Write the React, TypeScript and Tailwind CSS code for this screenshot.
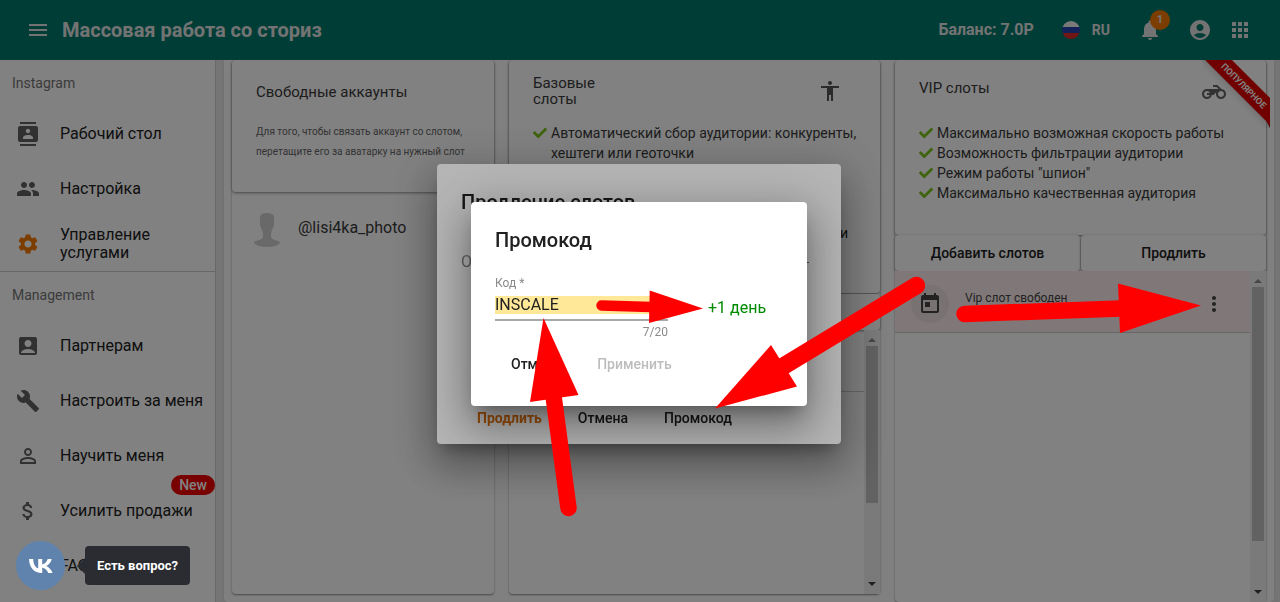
import { ReactNode } from "react";
import { FaCheck } from "react-icons/fa";
import {
    MdAccessibility, MdAccountBox, MdAccountCircle, MdApps, MdAttachMoney, MdBuild, MdContacts,
    MdGroup, MdHelp, MdMenu, MdMoreVert, MdNotifications, MdPermIdentity, MdSettings, MdToday,
} from "react-icons/md";

interface NavItem {
    label: string
    icon: ReactNode
    badge?: string
}

const instagramItems: NavItem[] = [
    { label: "Рабочий стол", icon: <MdContacts /> },
    { label: "Настройка", icon: <MdGroup /> },
    { label: "Управление услугами", icon: <MdSettings className="text-[#f57c00]" /> },
]

const managementItems: NavItem[] = [
    { label: "Партнерам", icon: <MdAccountBox /> },
    { label: "Настроить за меня", icon: <MdBuild /> },
    { label: "Научить меня", icon: <MdPermIdentity /> },
    { label: "Усилить продажи", icon: <MdAttachMoney />, badge: "New" },
    { label: "FAQ", icon: <MdHelp /> },
]

const vipFeatures = [
    "Максимально возможная скорость работы",
    "Возможность фильтрации аудитории",
    'Режим работы "шпион"',
    "Максимально качественная аудитория",
]

function NavGroup({ title, items }: { title: string, items: NavItem[] }) {
    return (
        <div>
            <div className="h-[46px] flex items-center px-3 text-sm text-[#757575]">{title}</div>
            {items.map((item) => (
                <a key={item.label} href="#" className="relative h-[55px] flex items-center pl-4 pr-2 gap-5">
                    <span className="text-2xl text-[#616161] shrink-0">{item.icon}</span>
                    <span className="text-base leading-[18px] text-[#212121]">{item.label}</span>
                    {item.badge && (
                        <span className="absolute -top-2 right-0 h-5 px-2 rounded-full bg-[#f00000] text-white text-sm font-medium">
                            {item.badge}
                        </span>
                    )}
                </a>
            ))}
        </div>
    )
}

function Feature({ children }: { children: ReactNode }) {
    return (
        <li className="flex gap-1 text-sm leading-5 text-[#3a3a3a]">
            <FaCheck className="shrink-0 mt-[3px] size-3.5 text-[#7cc61c]" />
            <span>{children}</span>
        </li>
    )
}

function Scrollbar({ thumb }: { thumb: string }) {
    return (
        <div className="w-4 shrink-0 bg-[#f1f1f1] flex flex-col items-center py-1">
            <div className="border-x-4 border-b-4 border-x-transparent border-b-[#8a8a8a] mt-1 mb-1" />
            <div className={`w-3 bg-[#c1c1c1] ${thumb}`} />
            <div className="border-x-4 border-t-4 border-x-transparent border-t-[#404040] mt-auto mb-1" />
        </div>
    )
}

function Column({ className, children }: { className: string, children: ReactNode }) {
    return (
        <section className={`relative min-w-0 flex flex-col rounded bg-white shadow-[0_1px_2px_rgba(0,0,0,0.45)] ${className}`}>
            {children}
        </section>
    )
}

const card = "rounded bg-white shadow-[0_1px_3px_rgba(0,0,0,0.45)]"
const cardTitle = "text-[15px] text-[#3a3a3a]"
const dialog = "rounded bg-white flex flex-col px-6 shadow-[0_11px_15px_-7px_rgba(0,0,0,0.3),0_24px_38px_3px_rgba(0,0,0,0.2),0_9px_46px_8px_rgba(0,0,0,0.2)]"
const flatButton = "h-9 px-4 text-sm font-medium"

// Pointers drawn over the whole screen, one path per arrow
function Arrows() {
    return (
        <svg viewBox="0 0 1280 602" className="fixed inset-0 w-full h-full z-40 pointer-events-none" fill="#f00" stroke="#f00">
            <g strokeLinecap="round">
                <path d="M568.5 508 L553.5 396" strokeWidth="16.5" />
                <path d="M916.5 285.5 L782 367" strokeWidth="17.5" />
                <path d="M964.5 314 L1121 308.5" strokeWidth="16.5" />
                <path d="M601.5 305.5 L651 307" strokeWidth="10.5" />
            </g>
            <g stroke="none">
                <path d="M543.5 318 L578.5 395 L530 402 Z" />
                <path d="M715 408.5 L771 345 L797 386.5 Z" />
                <path d="M1201 305.5 L1118 283.5 L1120 333 Z" />
                <path d="M703 308.5 L649.7 290.5 L649 323 Z" />
            </g>
        </svg>
    )
}

export default function App() {
    return (
        <div className="h-screen overflow-hidden flex flex-col bg-white font-[Roboto,sans-serif] text-[#212121]">
            <header className="relative z-10 h-[60px] shrink-0 bg-[#00796b] text-[#e4e4e4] flex items-center justify-between px-7">
                <div className="flex items-center gap-3">
                    <button aria-label="Меню"><MdMenu className="size-6 -ml-0.5" /></button>
                    <h1 className="text-xl font-bold">Массовая работа со сториз</h1>
                </div>
                <div className="flex items-center">
                    <span className="font-bold text-base">Баланс: 7.0Р</span>
                    <button className="flex items-center gap-3 ml-7 font-bold text-sm">
                        <svg viewBox="0 0 18 18" className="size-[18px] rounded-full">
                            <path d="M0 0h18v6H0z" fill="#f0f0f0" />
                            <path d="M0 6h18v6H0z" fill="#2444b0" />
                            <path d="M0 12h18v6H0z" fill="#e02b2b" />
                        </svg>
                        RU
                    </button>
                    <button aria-label="Уведомления" className="relative ml-7">
                        <MdNotifications className="size-6" />
                        <span className="absolute -top-2 left-3 size-5 rounded-full bg-[#f57c00] text-[11px] leading-5 font-bold">1</span>
                    </button>
                    <button aria-label="Профиль" className="ml-[26px]"><MdAccountCircle className="size-6" /></button>
                    <button aria-label="Приложения" className="ml-4"><MdApps className="size-6" /></button>
                </div>
            </header>

            <div className="flex flex-1 min-h-0">
                <nav className="w-[216px] shrink-0 border-r border-[#d0d0d0] overflow-hidden">
                    <NavGroup title="Instagram" items={instagramItems} />
                    <div className="border-t border-[#ccc]" />
                    <NavGroup title="Management" items={managementItems} />
                </nav>

                <div className="flex-1 min-w-0 bg-[#e8e8e8] pl-2 pr-1.5">
                    <main className="h-full flex gap-[15px] bg-[#fdfdfd] rounded-b px-2 shadow">
                        <Column className="flex-[262] mb-2">
                            <div className={`${card} h-[132px] px-6 pt-5`}>
                                <h2 className={`${cardTitle} leading-6`}>Свободные аккаунты</h2>
                                <p className="mt-[18px] text-[10px] leading-5 text-[#666]">
                                    Для того, чтобы связать аккаунт со слотом, перетащите его за аватарку на нужный слот
                                </p>
                            </div>
                            <div className="flex items-center gap-4 px-5 pt-4">
                                <svg viewBox="0 0 30 40" className="w-[30px] h-10 text-[#cfcfcf]" fill="currentColor">
                                    <path d="M15 5c4 0 7 1 7 5v6c0 2-1 4-2 6-1 2-1 4-1 6 0 3 3 4 7 5 1 0 2 1 2 2-3 3-8 4-13 4s-10-1-13-4c0-1 1-2 2-2 4-1 7-2 7-5 0-2 0-4-1-6-1-2-2-4-2-6v-6c0-4 3-5 7-5z" />
                                </svg>
                                <span className="text-base text-[#3a3a3a]">@lisi4ka_photo</span>
                            </div>
                        </Column>

                        <Column className="flex-[371] mb-2">
                            <div className={`${card} h-[233px] pl-6 pr-4 pt-[15px] flex flex-col`}>
                                <div className="flex justify-between items-center pr-[22px]">
                                    <h2 className={`${cardTitle} leading-4 w-20`}>Базовые слоты</h2>
                                    <MdAccessibility className="size-6 text-[#555]" />
                                </div>
                                <ul className="mt-4">
                                    <Feature>Автоматический сбор аудитории: конкуренты, хештеги или геоточки</Feature>
                                </ul>
                                <span className="self-end mt-[60px] mr-4 text-sm">и</span>
                            </div>
                            <div className={`${card} h-9 mt-px`} />
                            <div className="flex flex-1">
                                <div className="flex-1">
                                    <div className="h-[62px] border-b border-[#ccc]" />
                                </div>
                                <Scrollbar thumb="h-[157px]" />
                            </div>
                        </Column>

                        <Column className="flex-[371]">
                            <div className={`${card} h-[175px] px-6 pt-3`}>
                                <div className="flex justify-between items-center pr-4">
                                    <h2 className={`${cardTitle} leading-6`}>VIP слоты</h2>
                                    <svg viewBox="0 0 24 24" className="size-6 mt-2 text-[#666]" fill="currentColor">
                                        <path d="M19.44 9.03L15.41 5H11v2h3.59l2 2H5c-2.8 0-5 2.2-5 5s2.2 5 5 5c2.46 0 4.45-1.69 4.9-4h1.65l2.77-2.77c-.21.54-.32 1.14-.32 1.77 0 2.8 2.2 5 5 5s5-2.2 5-5c0-2.65-1.97-4.77-4.56-4.97zM7.82 15C7.4 16.15 6.28 17 5 17c-1.63 0-3-1.37-3-3s1.37-3 3-3c1.28 0 2.4.85 2.82 2H5v2h2.82zM19 17c-1.66 0-3-1.34-3-3s1.34-3 3-3 3 1.34 3 3-1.34 3-3 3z" />
                                    </svg>
                                </div>
                                <ul className="mt-[19px]">
                                    {vipFeatures.map((text) => <Feature key={text}>{text}</Feature>)}
                                </ul>
                            </div>
                            <div className="absolute top-0 -right-1 size-[68px] overflow-hidden">
                                <span className="absolute right-0 bottom-0 border-l-4 border-t-8 border-l-transparent border-t-[#a80000]" />
                                <div className="absolute -left-5 top-4 w-[124px] h-[19px] rotate-45 bg-[#e00000] text-white text-center text-[9px] leading-5 font-bold shadow-md">
                                    ПОПУЛЯРНОЕ
                                </div>
                            </div>
                            <div className="flex gap-px">
                                <button className={`${card} h-9 flex-1 text-sm font-medium`}>Добавить слотов</button>
                                <button className={`${card} h-9 flex-1 text-sm font-medium`}>Продлить</button>
                            </div>
                            <div className="flex flex-1">
                                <div className="flex-1">
                                    <div className="h-[62px] flex items-center bg-[#fdeeee] border-b border-[#ccc] pl-4 pr-6 pt-1 text-[#444]">
                                        <span className="size-[38px] rounded-full bg-[#efe2e2] flex items-center justify-center">
                                            <MdToday className="size-6" />
                                        </span>
                                        <span className="flex-1 ml-4 pb-3 text-xs">Vip слот свободен</span>
                                        <button aria-label="Действия"><MdMoreVert className="size-6" /></button>
                                    </div>
                                </div>
                                <Scrollbar thumb="h-[254px]" />
                            </div>
                        </Column>
                    </main>
                </div>
            </div>

            <div className="fixed inset-0 z-20 bg-black/29 flex items-center justify-center pt-1.5 pr-0.5">
                <div role="dialog" aria-labelledby="renew-title" className={`${dialog} w-[404px] h-[280px] pt-6 pb-2`}>
                    <h2 id="renew-title" className="text-xl leading-7 font-medium">Продление слотов</h2>
                    <div className="flex items-center justify-between mt-[34px] pr-2 text-base text-[#888]">
                        <span>О</span>
                        <span className="w-2 h-px bg-[#666]" />
                    </div>
                    <div className="flex gap-1 mt-auto">
                        <button className="h-9 px-4 text-sm font-bold text-[#dc7010]">Продлить</button>
                        <button className={flatButton}>Отмена</button>
                        <button className={flatButton}>Промокод</button>
                    </div>
                </div>
            </div>

            <div className="fixed inset-0 z-30 bg-black/29 flex items-center justify-center pt-1.5 pr-0.5">
                <form role="dialog" aria-labelledby="promo-title" className={`${dialog} w-[336px] h-[204px] py-6`}>
                    <h2 id="promo-title" className="text-xl leading-7 font-medium">Промокод</h2>
                    <div className="flex items-center gap-10 mt-[21px]">
                        <div className="w-[173px] flex flex-col text-xs text-[#8a8a8a]">
                            <label htmlFor="code">Код *</label>
                            <div className="py-[5px] border-b-2 border-[#a8a8a8]">
                                <input id="code" defaultValue="INSCALE" maxLength={20} className="block w-full h-[18px] bg-[#ffe898] text-base text-[#212121] outline-none" />
                            </div>
                            <span className="self-end mt-[3px]">7/20</span>
                        </div>
                        <span className="text-base text-[#008a00]">+1 день</span>
                    </div>
                    <div className="flex gap-1 mt-auto">
                        <button type="button" className={flatButton}>Отмена</button>
                        <button type="submit" disabled className={`${flatButton} text-[#bdbdbd]`}>Применить</button>
                    </div>
                </form>
            </div>

            <Arrows />

            <div className="fixed left-4 bottom-3 z-50 flex items-center gap-5">
                <button aria-label="ВКонтакте" className="size-[49px] rounded-full bg-[#5f83ad] flex items-center justify-center">
                    <svg viewBox="0 0 24 14" className="w-6 h-[14px]" fill="#fff">
                        <path d="M13 14C5 14 .4 8.8 0 0h4.2c.2 6.2 2.9 8.8 5 9.3V0h4v5.4c2.3-.2 4.7-2.7 5.5-5.4h4c-.7 3.5-3.4 6-5.3 7.1 1.9.9 5 3.2 6.2 6.9h-4.4c-.9-2.8-3.2-4.9-6-5.2V14z" />
                    </svg>
                </button>
                <div className="relative h-[39px] px-3 rounded-sm bg-[#2a2c31] text-white text-[13px] leading-[39px] font-bold">
                    <span className="absolute -left-2 top-3 border-y-8 border-r-8 border-y-transparent border-r-[#2a2c31]" />
                    Есть вопрос?
                </div>
            </div>
        </div>
    )
}
